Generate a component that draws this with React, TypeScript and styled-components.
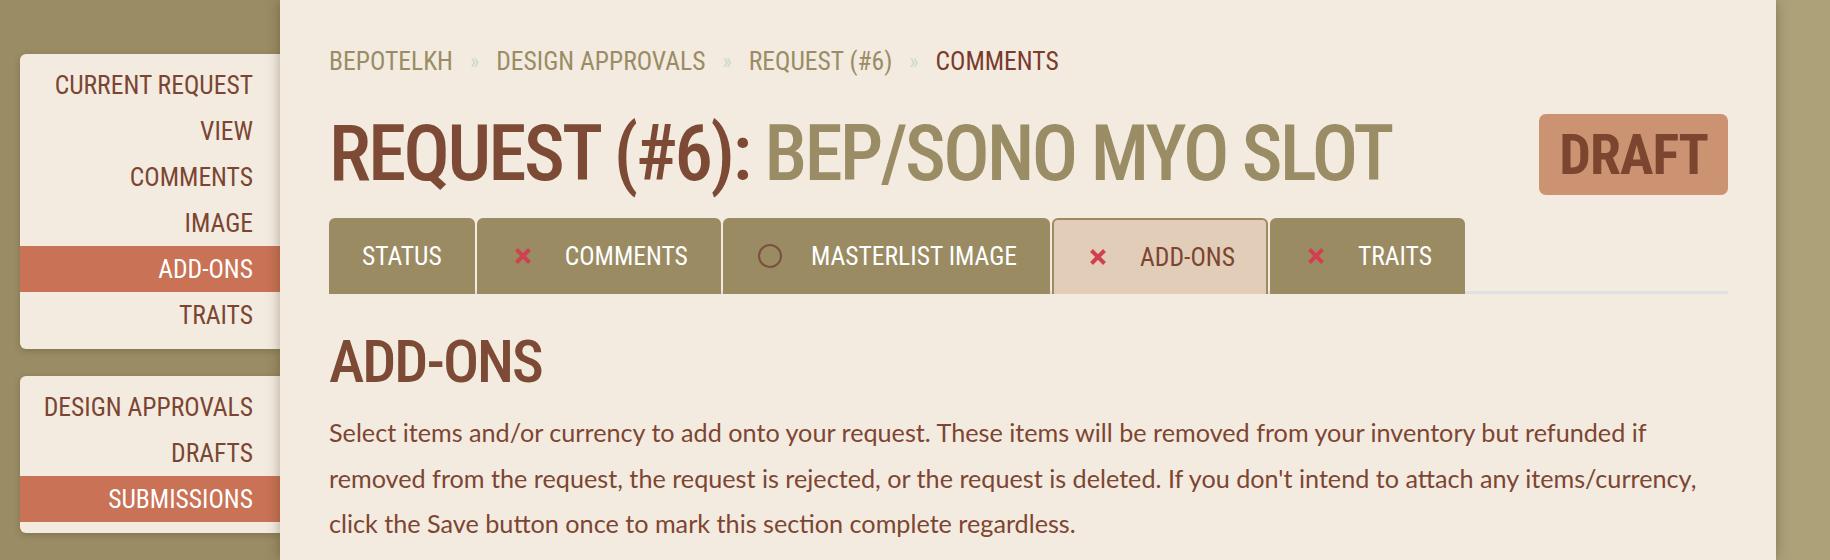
import React from "react";
import styled, { createGlobalStyle } from "styled-components";

const HEAD = `"Roboto Condensed", "Liberation Sans Narrow", "DejaVu Sans Condensed", Roboto, sans-serif`;

const GlobalStyle = createGlobalStyle`
  html, body {
    margin: 0;
    padding: 0;
    background: #ada17a;
  }
  * { box-sizing: border-box; }
`;

const Page = styled.div`
  display: flex;
  width: 1830px;
  height: 560px;
  overflow: hidden;
  background: #ada17a;
`;

const Sidebar = styled.nav`
  width: 280px;
  flex-shrink: 0;
  background: #9a8c64;
  padding: 54px 0 0 20px;
  display: flex;
  flex-direction: column;
  gap: 27px;
`;

const NavCard = styled.div`
  background: #f3ebe0;
  border-radius: 6px 0 0 6px;
  padding: 8px 0 11px;
  box-shadow: 0 2px 6px rgba(60, 50, 20, 0.25);
`;

const NavItem = styled.div<{ $active?: boolean }>`
  height: 46px;
  line-height: 46px;
  padding-right: 27px;
  text-align: right;
  font-family: ${HEAD};
  font-stretch: condensed;
  font-size: 25.6px;
  text-transform: uppercase;
  color: ${({ $active }) => ($active ? "#ffffff" : "#7b4532")};
  background: ${({ $active }) => ($active ? "#c97255" : "transparent")};
`;

const Main = styled.main`
  width: 1496px;
  flex-shrink: 0;
  background: #f3ebe0;
  padding: 46px 48px 0 49px;
  position: relative;
  z-index: 1;
  box-shadow: 0 0 12px rgba(50, 40, 10, 0.35);
`;

const Crumbs = styled.div`
  display: flex;
  align-items: center;
  gap: 17px;
  height: 30px;
  font-family: ${HEAD};
  font-stretch: condensed;
  font-size: 25.6px;
  color: #9a8c64;
  text-transform: uppercase;
`;

const Sep = styled.span`
  color: #c9dbcb;
  font-size: 22px;
`;

const Current = styled.span`
  color: #7a3a2c;
`;

const TitleRow = styled.div`
  display: flex;
  justify-content: space-between;
  align-items: center;
  margin-top: 38px;
  height: 81px;
`;

const Title = styled.h1`
  margin: 0;
  font-family: ${HEAD};
  font-stretch: condensed;
  font-weight: 500;
  font-size: 77px;
  letter-spacing: -2.6px;
  line-height: 1;
  color: #7d4a35;
`;

const TitleName = styled.span`
  color: #9a8c64;
`;

const Badge = styled.div`
  height: 81px;
  padding: 0 20px;
  display: flex;
  align-items: center;
  border-radius: 7px;
  background: #cc9373;
  color: #7b4530;
  font-family: ${HEAD};
  font-stretch: condensed;
  font-weight: 700;
  font-size: 56px;
  letter-spacing: -1px;
`;

const Tabs = styled.div`
  display: flex;
  gap: 2px;
  margin-top: 23px;
  border-bottom: 3px solid #dfe0e3;
`;

const Tab = styled.div<{ $active?: boolean }>`
  height: 76px;
  margin-bottom: -3px;
  display: flex;
  align-items: center;
  gap: 29px;
  padding: 0 ${({ $active }) => ($active ? "31px" : "33px")};
  border-radius: 6px 6px 0 0;
  font-family: ${HEAD};
  font-stretch: condensed;
  font-size: 25.6px;
  text-transform: uppercase;
  background: ${({ $active }) => ($active ? "#e2cdb8" : "#9a8b63")};
  color: ${({ $active }) => ($active ? "#7b4530" : "#ffffff")};
  border: ${({ $active }) => ($active ? "2px solid #9a8b63" : "none")};
  border-bottom: none;
`;

const IconBox = styled.span`
  width: 26px;
  height: 26px;
  display: inline-flex;
  align-items: center;
  justify-content: center;
`;

const Heading = styled.h2`
  margin: 34px 0 0;
  font-family: ${HEAD};
  font-stretch: condensed;
  font-weight: 500;
  font-size: 60px;
  letter-spacing: -2px;
  line-height: 68px;
  color: #7d4a35;
`;

const Text = styled.p`
  margin: 14px 0 0;
  font-family: Lato, "Liberation Sans", sans-serif;
  font-size: 25.2px;
  line-height: 45.5px;
  color: #7d4532;
`;

const Cross = () => (
  <IconBox>
    <svg width="18" height="18" viewBox="0 0 18 18">
      <path d="M2.5 2.5 L15.5 15.5 M15.5 2.5 L2.5 15.5" stroke="#d1404f" strokeWidth="4" strokeLinecap="butt" />
    </svg>
  </IconBox>
);

const Ring = () => (
  <IconBox>
    <svg width="26" height="26" viewBox="0 0 26 26">
      <circle cx="14" cy="13" r="11" fill="none" stroke="#7a5040" strokeWidth="2" />
    </svg>
  </IconBox>
);

const sideGroups = [
  {
    items: ["Current Request", "View", "Comments", "Image", "Add-Ons", "Traits"],
    active: "Add-Ons",
  },
  {
    items: ["Design Approvals", "Drafts", "Submissions"],
    active: "Submissions",
  },
];

const tabs: { label: string; icon?: "x" | "o"; active?: boolean }[] = [
  { label: "Status" },
  { label: "Comments", icon: "x" },
  { label: "Masterlist Image", icon: "o" },
  { label: "Add-Ons", icon: "x", active: true },
  { label: "Traits", icon: "x" },
];

export default function App() {
  return (
    <>
      <GlobalStyle />
      <Page>
        <Sidebar>
          {sideGroups.map((g, i) => (
            <NavCard key={i}>
              {g.items.map((item) => (
                <NavItem key={item} $active={item === g.active}>
                  {item}
                </NavItem>
              ))}
            </NavCard>
          ))}
        </Sidebar>
        <Main>
          <Crumbs>
            <span>Bepotelkh</span>
            <Sep>»</Sep>
            <span>Design Approvals</span>
            <Sep>»</Sep>
            <span>Request (#6)</span>
            <Sep>»</Sep>
            <Current>Comments</Current>
          </Crumbs>
          <TitleRow>
            <Title>
              REQUEST (#6): <TitleName>BEP/SONO MYO SLOT</TitleName>
            </Title>
            <Badge>DRAFT</Badge>
          </TitleRow>
          <Tabs>
            {tabs.map((t) => (
              <Tab key={t.label} $active={t.active}>
                {t.icon === "x" && <Cross />}
                {t.icon === "o" && <Ring />}
                {t.label}
              </Tab>
            ))}
          </Tabs>
          <Heading>ADD-ONS</Heading>
          <Text>
            Select items and/or currency to add onto your request. These items will be removed from your
            inventory but refunded if removed from the request, the request is rejected, or the request is
            deleted. If you don't intend to attach any items/currency, click the Save button once to mark this
            section complete regardless.
          </Text>
        </Main>
      </Page>
    </>
  );
}
